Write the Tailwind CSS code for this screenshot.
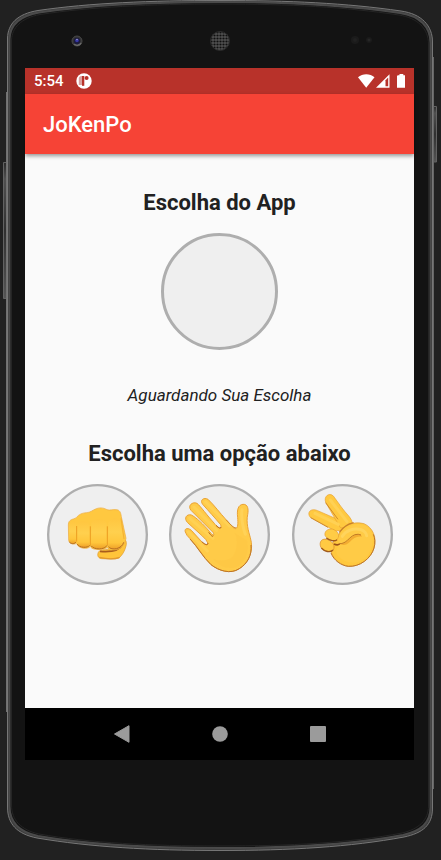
<!DOCTYPE html>
<html lang="pt-BR">
<head>
<meta charset="utf-8">
<meta name="viewport" content="width=device-width, initial-scale=1">
<title>JoKenPo</title>
<script src="https://cdn.jsdelivr.net/npm/@tailwindcss/browser@4"></script>
</head>
<body class="min-h-screen bg-[#212121] font-['Roboto',sans-serif]">
<div class="relative flex min-h-screen flex-col pr-[27px] pb-[100px] pl-[25px]">
  <!-- phone body -->
  <svg class="absolute inset-0 h-full w-full" viewBox="0 0 441 860" preserveAspectRatio="none" aria-hidden="true">
    <defs>
      <linearGradient id="key" x1="0" y1="0" x2="0" y2="1"><stop offset="0" stop-color="#2a2a2a"/><stop offset=".12" stop-color="#505050"/><stop offset=".5" stop-color="#303030"/><stop offset="1" stop-color="#555"/></linearGradient>
    </defs>
    <path d="M3.500 162.500H8V298.500H3.500Z" fill="url(#key)" stroke="#626262"/>
    <path d="M6.500 92V712" stroke="#707070"/>
    <path d="M433 106.500H436.500V162H433Z" fill="url(#key)" stroke="#626262"/>
    <path d="M433.500 57V789" stroke="#666"/>
    <path d="M7.500 38C8 24 17 14 38 10.500C90 3 150 .5 220 .5C290 .5 345 3 401 11C422 14 432.500 26 432.500 42V808C432.500 825 423 833 404 837C350 847 290 850.500 220 850.500C150 850.500 90 847 37 838C17 834 7.500 824 7.500 807Z" fill="#3d3d3d" stroke="#777"/>
    <path d="M9.500 39C10 26 19 16 39 12.500C90 5 150 2 220 2C290 2 345 5 400 13C420 16 430.500 27 430.500 43V807C430.500 823 421 831 403 835C350 845 290 848 220 848C150 848 90 845 38 836C19 832 9.500 822 9.500 806Z" fill="#131313" stroke="#4a4a4a" stroke-width="2"/>
    <path d="M11.500 40C12 28 21 18 40 14.500C90 7 150 4 220 4C290 4 345 7 399 15C418 18 428.500 29 428.500 44V806C428.500 820 419 829 402 833C350 843 290 846 220 846C150 846 90 843 39 834C21 830 11.500 820 11.500 805Z" fill="#131313" stroke="#252525"/>
  </svg>

  <!-- camera, speaker, sensors -->
  <div class="relative grid h-[68px] grid-cols-[1fr_auto_1fr] items-center pt-[14px]" aria-hidden="true">
    <svg class="ml-[46px] h-3 w-3" viewBox="0 0 12 12"><circle cx="6" cy="6" r="5" fill="#343434" stroke="#484848"/><path d="M3 9A4.500 4.500 0 0 0 10 8" stroke="#6a6a6a" stroke-width="1.500" fill="none"/><circle cx="6" cy="6" r="3.200" fill="#1b1b3c"/><circle cx="6" cy="5.500" r="1.800" fill="#3838a6"/><circle cx="6" cy="4.500" r=".8" fill="#9c9cd0"/></svg>
    <svg class="h-5 w-5" viewBox="0 0 20 20">
      <defs><pattern id="mesh" width="3" height="3" patternUnits="userSpaceOnUse"><rect width="3" height="3" fill="#505050"/><circle cx="1.500" cy="1.500" r="1.100" fill="#101010"/></pattern></defs>
      <circle cx="10" cy="10" r="9.500" fill="url(#mesh)" stroke="#2c2c2c"/>
    </svg>
    <svg class="mr-[41px] h-3 w-6 justify-self-end" viewBox="0 0 24 12"><circle cx="6" cy="5" r="4" fill="#1b1b1b"/><circle cx="6" cy="5" r="2" fill="#212121"/><circle cx="20" cy="5" r="3" fill="#1b1b1b"/><circle cx="20" cy="5" r="1.500" fill="#262626"/></svg>
  </div>

  <!-- screen -->
  <div class="relative flex grow flex-col bg-[#fafafa]">
    <div class="flex h-[26px] items-center justify-between bg-[#b8322a] pr-2 pl-[9px] text-white">
      <div class="flex items-center gap-3">
        <span class="text-[15px] leading-[26px] font-medium">5:54</span>
        <svg class="h-4 w-4" viewBox="0 0 16 16" aria-hidden="true"><circle cx="8" cy="8" r="7.700" fill="#fff"/><path d="M2.800 12V5.500Q2.800 3 5.500 3H6.500V12Z" fill="#dba29f"/><path d="M6 3H8.300V12.800H6Z" fill="#b8322a"/><circle cx="10.600" cy="5" r="2" fill="#b8322a"/></svg>
      </div>
      <svg class="h-4 w-12" viewBox="0 0 48 16" aria-hidden="true">
        <path d="M0 4.200C4.500.2 12 .2 16.500 4.200L8.200 14.700Z" fill="#fff"/>
        <path d="M31.500 1.200V14.800H18Z" fill="#fff"/><path d="M27.500 7.200L30.200 4.400V13.300H27.500Z" fill="#b8322a"/>
        <path d="M39.800 2.300H41.500V1H45.300V2.300H47V14.800H39V3Z" fill="#fff"/>
      </svg>
    </div>
    <header class="flex h-[60px] items-center bg-[#f64336] px-[18px] pt-[2px] shadow-[0_2px_4px_rgba(0,0,0,0.4)]">
      <h1 class="text-[22px] leading-7 font-medium text-white">JoKenPo</h1>
    </header>

    <main class="flex grow flex-col items-center text-[#212121]">
      <h2 class="mt-9 text-[22px] leading-[26px] font-bold">Escolha do App</h2>
      <div class="mt-[17px] h-[117px] w-[117px] rounded-full border-3 border-[#aeaeae] bg-[#efefef]" role="img" aria-label="Escolha do App"></div>
      <p class="mt-[34px] text-[17px] leading-[22px] italic">Aguardando Sua Escolha</p>
      <h2 class="mt-[35px] text-[22px] leading-[26px] font-bold">Escolha uma opção abaixo</h2>
      <div class="mt-[17px] flex w-full justify-evenly">
        <button type="button" class="h-[101px] w-[101px] rounded-full" aria-label="Pedra">
          <svg class="h-full w-full" viewBox="21 27 303 303" aria-hidden="true">
            <defs>
              <linearGradient id="skin" x1="0" y1="0" x2="0" y2="1"><stop offset="0" stop-color="#ffc640"/><stop offset=".45" stop-color="#ffd04e"/><stop offset=".8" stop-color="#ffc63c"/><stop offset="1" stop-color="#eea028"/></linearGradient>
            </defs>
            <circle cx="172.500" cy="178.500" r="148" fill="#efefef" stroke="#aeaeae" stroke-width="7"/>
            <path d="M240 200C255 185 262 198 258 213C254 229 247 240 238 248C232 253 205 252 185 251C174 250 170 240 176 230C184 220 225 230 240 200Z" fill="#ffc43a" stroke="#e09a2c" stroke-width="2"/>
            <path d="M178 247C195 251 223 253 239 247" stroke="#e19a30" stroke-width="4" fill="none"/>
            <path d="M180 229C205 231 238 229 247 209" stroke="#a85c1c" stroke-width="5" fill="none"/>
            <path d="M85 150C85 132 99 134 109 128C117 117 128 114 139 113C151 113 158 105 169 101C184 96 193 100 201 104C213 107 216 103 228 104C238 104 242 110 244 125L258 190L254 205C246 214 242 224 220 225C210 226 205 223 202 217C196 225 181 225 168 223C157 222 153 219 151 214C145 224 113 222 110 205C101 210 87 206 86 196Z" fill="#ffc840" stroke="#edaa3c" stroke-width="2"/>
            <path d="M87 148C90 136 105 136 109 144L108 199C106 210 89 207 87 195Z" fill="url(#skin)"/>
            <path d="M111 150C114 135 146 136 149 151V205C149 222 113 221 112 201Z" fill="url(#skin)"/>
            <path d="M154 145C157 127 199 128 200 148V208C198 226 154 224 153 207Z" fill="url(#skin)"/>
            <path d="M205 145C207 130 237 121 241 141L251 198C250 223 206 232 204 207Z" fill="url(#skin)"/>
            <path d="M110 153V200M151 154V211M202 154V211" stroke="#ec9d22" stroke-width="3" fill="none"/>
            <path d="M243 130L252 192" stroke="#f3b034" stroke-width="3" fill="none"/>
            <path d="M88 201C93 207 103 208 108 201M112 207C117 219 143 220 149 211M153 212C161 225 195 225 201 211M205 215C215 228 246 222 251 202" stroke="#b56a20" stroke-width="3" fill="none"/>
          </svg>
        </button>
        <button type="button" class="h-[101px] w-[101px] rounded-full" aria-label="Papel">
          <svg class="h-full w-full" viewBox="21 27 303 303" aria-hidden="true">
            <circle cx="172.500" cy="178.500" r="148" fill="#efefef" stroke="#aeaeae" stroke-width="7"/>
            <path d="M70 171C66 159 79 158 88 166L118 199Q135 216 138 205Q134 194 121 183L77 143C64 130 74 116 88 120C101 126 125 149 142 169C150 181 160 185 153 172L87 106C76 92 91 79 105 85C118 96 133 119 157 145C166 158 181 166 176 149C160 130 139 107 122 88C112 75 126 66 138 73C157 91 174 114 192 134C203 145 212 159 220 161C229 159 228 145 227 127C224 104 229 89 243 88C258 87 260 103 257 119C252 143 259 167 265 188C276 225 262 262 232 281C205 299 170 287 147 269C123 246 108 215 84 191Q73 181 70 171Z" fill="#ffcb48" stroke="#eaa235" stroke-width="3"/>
            <path d="M84 192C107 216 122 246 147 269C170 287 205 299 232 281C257 266 270 240 267 210" fill="none" stroke="#bd7629" stroke-width="3"/>
            <path d="M79 171L136 228M83 130L153 190M96 96L164 166M131 81L202 153" stroke="#ffd154" stroke-width="9" stroke-linecap="round" fill="none"/>
            <path d="M240 104C237 126 242 154 250 178" stroke="#ffd258" stroke-width="9" stroke-linecap="round" fill="none"/>
            <path d="M217 173C229 187 227 228 210 247C193 259 173 259 155 252C174 282 215 286 235 269C254 253 263 221 254 196Z" fill="#fdc644" opacity=".6"/>
            <path d="M138 204Q137 216 119 200M154 182Q152 189 140 172M177 156Q176 165 162 151" fill="none" stroke="#b66a22" stroke-width="3"/>
            <path d="M192 134Q218 164 223 158" fill="none" stroke="#d08a2c" stroke-width="3"/>
          </svg>
        </button>
        <button type="button" class="h-[101px] w-[101px] rounded-full" aria-label="Tesoura">
          <svg class="h-full w-full" viewBox="21 27 303 303" aria-hidden="true">
            <circle cx="172.500" cy="178.500" r="148" fill="#efefef" stroke="#aeaeae" stroke-width="7"/>
            <path d="M76 127C63 111 80 98 98 107L169 138C178 143 183 155 176 165L151 168Z" fill="#ffc940" stroke="#e8a232" stroke-width="2"/>
            <path d="M123 84C114 65 132 51 145 63C159 82 175 106 192 124C202 137 208 150 192 162L166 158Z" fill="#ffc940" stroke="#e8a232" stroke-width="2"/>
            <path d="M77 128L129 157M122 83L159 133" stroke="#d08a2c" stroke-width="3" fill="none"/>
            <path d="M90 115L160 148M136 75L186 140" stroke="#ffd154" stroke-width="9" stroke-linecap="round" fill="none"/>
            <path d="M160 182C170 153 204 137 237 146C263 157 277 188 267 219C258 251 224 276 190 274C169 271 144 253 138 230L146 196Z" fill="#ffc83e" stroke="#e09a2c" stroke-width="2"/>
            <path d="M163 172C175 155 192 146 206 143" fill="none" stroke="#c8802a" stroke-width="4"/>
            <path d="M120 181C117 165 136 158 147 164C161 172 166 183 155 195C145 202 124 191 120 181Z" fill="#ffcc46" stroke="#e59b29" stroke-width="2"/>
            <path d="M107 216C101 199 112 188 129 194C144 200 151 213 145 225C138 234 116 230 107 216Z" fill="#ffca43" stroke="#d48727" stroke-width="2"/>
            <path d="M124 189C134 197 149 200 156 194M109 219C119 230 135 234 144 225" fill="none" stroke="#a05a1c" stroke-width="4"/>
            <path d="M147 207Q158 213 166 206" fill="none" stroke="#9a521a" stroke-width="5"/>
            <path d="M160 201C156 178 180 157 207 149C230 143 254 154 262 177C267 206 258 236 236 253C213 269 184 266 163 247C150 236 152 218 166 208Z" fill="#ffcb46"/>
            <path d="M166 207C186 206 193 188 210 180C220 176 228 178 231 185C216 182 204 190 195 200C186 209 176 213 166 207Z" fill="#f3ad31"/>
            <path d="M163 206C185 207 191 186 210 179Q220 176 228 180" fill="none" stroke="#c27a24" stroke-width="3"/>
            <path d="M172 184C181 168 206 157 228 164Q243 170 245 182" stroke="#ffd45c" stroke-width="9" stroke-linecap="round" fill="none"/>
            <path d="M138 234C147 257 169 272 190 274C224 276 258 251 267 219C271 204 270 189 265 178" fill="none" stroke="#bd7629" stroke-width="3"/>
          </svg>
        </button>
      </div>
    </main>

    <nav class="grid h-[52px] grid-cols-[1fr_98px_98px_1fr] items-center bg-black" aria-label="Sistema">
      <button type="button" class="col-start-1 mr-[-9px] justify-self-end" aria-label="Voltar"><svg class="h-[18px] w-[18px]" viewBox="0 0 18 18"><path d="M1.500 9L16 .7V17.300Z" fill="#9b9b9b" stroke="#9b9b9b" stroke-linejoin="round"/></svg></button>
      <button type="button" class="col-start-2 mr-[-8px] justify-self-end" aria-label="Início"><svg class="h-4 w-4" viewBox="0 0 16 16"><circle cx="8" cy="8" r="7.800" fill="#9b9b9b"/></svg></button>
      <button type="button" class="col-start-3 mr-[-8px] justify-self-end" aria-label="Recentes"><svg class="h-4 w-4" viewBox="0 0 16 16"><rect width="16" height="16" rx="1" fill="#9b9b9b"/></svg></button>
    </nav>
  </div>
</div>
</body>
</html>
